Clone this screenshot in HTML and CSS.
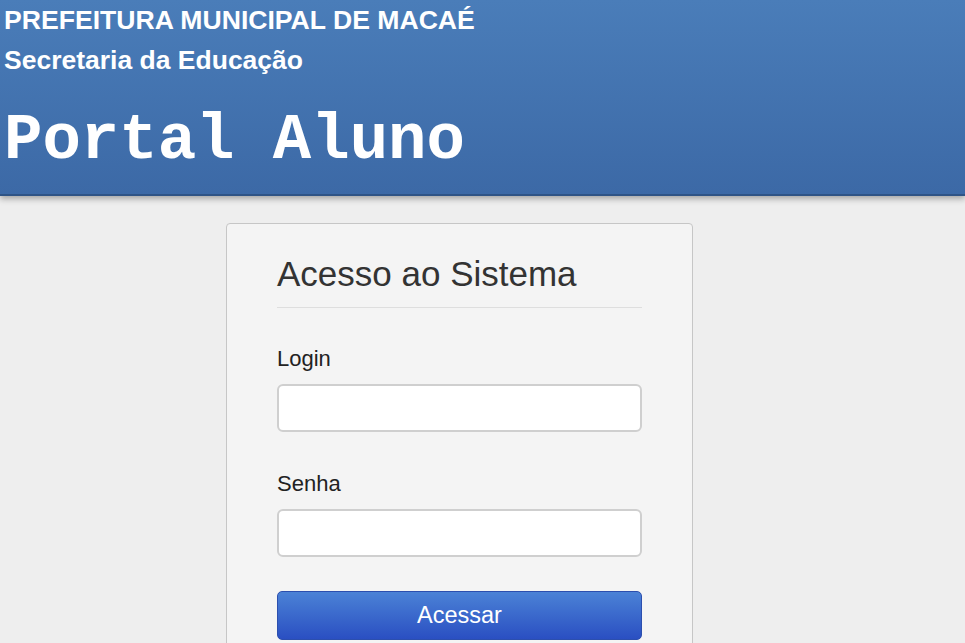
FILE: index.html
```html
<!DOCTYPE html>
<html lang="pt-BR">
<head>
  <meta charset="UTF-8" />
  <meta name="viewport" content="width=device-width, initial-scale=1.0"/>
  <title>Portal Aluno</title>
  <link rel="stylesheet" href="styles.css">
</head>
<body>

  <div class="header">
    <div class="org">PREFEITURA MUNICIPAL DE MACAÉ</div>
    <div class="dept">Secretaria da Educação</div>
    <div class="portal">Portal Aluno</div>
  </div>

  <div class="main">
    <div class="login-box">
      <h1>Acesso ao Sistema</h1>
      <label for="login">Login</label>
      <input type="text" id="login" />
      <label for="senha">Senha</label>
      <input type="password" id="senha" />
      <button>Acessar</button>
    </div>
  </div>

</body>
</html>
```

FILE: styles.css
```css
body {
  margin: 0;
  font-family: "Liberation Sans", Arial, sans-serif;
  background: #eeeeee;
  color: #333;
  overflow: hidden;
}
.header {
  height: 196px;
  padding: 4px 4px 0;
  box-sizing: border-box;
  color: #fff;
  background: linear-gradient(#4a7db9, #3c69a6);
  border-bottom: 2px solid #2f5486;
  box-shadow: 0 3px 6px rgba(0, 0, 0, 0.3);
}
.org {
  font-size: 26.6px;
  font-weight: bold;
  line-height: 33px;
}
.dept {
  font-size: 26.5px;
  font-weight: bold;
  line-height: 30px;
  margin-top: 8px;
}
.portal {
  font-family: "Courier New", "Nimbus Mono PS", "Courier 10 Pitch", "Liberation Mono", monospace;
  font-size: 64px;
  font-weight: bold;
  line-height: 60px;
  margin-top: 36px;
}
.main {
  display: flex;
  justify-content: center;
  padding-top: 27px;
  padding-right: 46px;
}
.login-box {
  width: 365px;
  padding: 28px 50px 40px;
  background: #f4f4f4;
  border: 1px solid #c6c6c6;
  border-radius: 4px;
  display: flex;
  flex-direction: column;
}
h1 {
  margin: 0;
  font-size: 35px;
  font-weight: normal;
  color: #333;
  line-height: 44px;
  padding-bottom: 11px;
  border-bottom: 1px solid #dedede;
  margin-bottom: 39px;
}
label {
  font-size: 22px;
  line-height: 24px;
  color: #222;
  margin-bottom: 13px;
}
input {
  height: 48px;
  box-sizing: border-box;
  border: 2px solid #cfcfcf;
  border-radius: 6px;
  background: #fff;
  margin-bottom: 40px;
  font-size: 18px;
  padding: 0 10px;
}
input:last-of-type {
  margin-bottom: 34px;
}
button {
  height: 49px;
  border: 1px solid #2c4fae;
  border-radius: 5px;
  color: #fff;
  font-family: inherit;
  font-size: 23.5px;
  background: linear-gradient(#4b82d6, #2a4fc2);
  cursor: pointer;
}
```
